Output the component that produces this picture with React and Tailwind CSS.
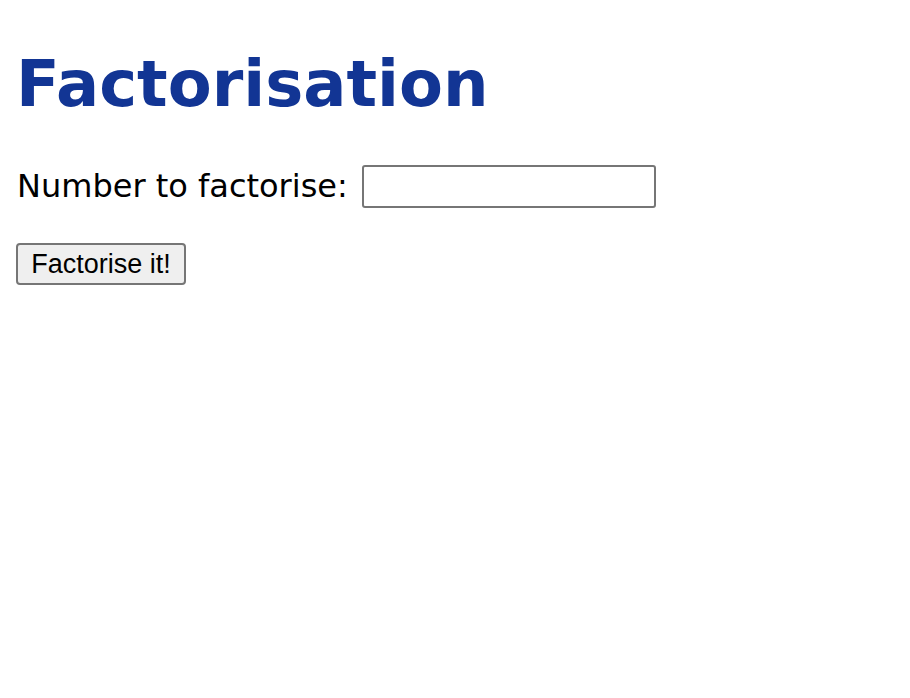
import React, { useState } from 'react';

export default function App() {
    const [value, setValue] = useState('');

    return (
        <div className="min-h-screen bg-white px-4 pt-[42px] text-black">
            <h1 className="text-[64px] leading-[84px] font-bold text-[#123594] font-['Verdana','DejaVu_Sans',sans-serif]">
                Factorisation
            </h1>

            <form onSubmit={(e) => e.preventDefault()} className="mt-[38px]">
                <div className="flex items-center gap-[14px]">
                    <label htmlFor="number" className="pl-[1px] text-[32px] leading-[44px] font-['Verdana','DejaVu_Sans',sans-serif]">
                        Number to factorise:
                    </label>
                    <input
                        id="number"
                        type="text"
                        value={value}
                        onChange={(e) => setValue(e.target.value)}
                        className="w-[294px] h-[43px] rounded-[3px] border-2 border-[#767676] bg-white px-2 text-[24px] outline-none"
                    />
                </div>
                <button
                    type="submit"
                    className="mt-[35px] w-[170px] h-[42px] rounded-[4px] border-2 border-[#767676] bg-[#efefef] text-[27px] leading-none text-black font-['Arial','Liberation_Sans',sans-serif]"
                >
                    Factorise it!
                </button>
            </form>
        </div>
    );
}
